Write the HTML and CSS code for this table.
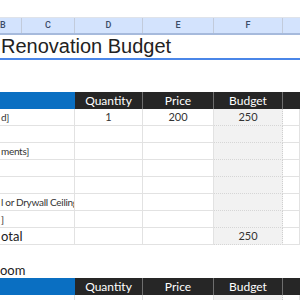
FILE: index.html
```html
<!DOCTYPE html>
<html lang="en">
<head>
<meta charset="utf-8">
<title>Renovation Budget</title>
<link rel="stylesheet" href="styles.css">
</head>
<body>
<div class="sheet">
  <div class="toolbar"></div>
  <div class="colhead">
    <div class="ch ch-b">B</div>
    <div class="ch">C</div>
    <div class="ch">D</div>
    <div class="ch">E</div>
    <div class="ch">F</div>
    <div class="ch ch-last"></div>
  </div>
  <div class="title-row"><h1 class="title">Renovation Budget</h1></div>
  <div class="spacer"></div>

  <div class="row thead">
    <div class="th th-cat"></div>
    <div class="th">Quantity</div>
    <div class="th">Price</div>
    <div class="th">Budget</div>
    <div class="th th-last"></div>
  </div>
  <div class="row">
    <div class="cell label">d]</div>
    <div class="cell num">1</div>
    <div class="cell num">200</div>
    <div class="cell num budget">250</div>
    <div class="cell"></div>
  </div>
  <div class="row">
    <div class="cell label"></div>
    <div class="cell"></div>
    <div class="cell"></div>
    <div class="cell budget"></div>
    <div class="cell"></div>
  </div>
  <div class="row">
    <div class="cell label">ments]</div>
    <div class="cell"></div>
    <div class="cell"></div>
    <div class="cell budget"></div>
    <div class="cell"></div>
  </div>
  <div class="row">
    <div class="cell label"></div>
    <div class="cell"></div>
    <div class="cell"></div>
    <div class="cell budget"></div>
    <div class="cell"></div>
  </div>
  <div class="row">
    <div class="cell label"></div>
    <div class="cell"></div>
    <div class="cell"></div>
    <div class="cell budget"></div>
    <div class="cell"></div>
  </div>
  <div class="row">
    <div class="cell label">l or Drywall Ceiling</div>
    <div class="cell"></div>
    <div class="cell"></div>
    <div class="cell budget"></div>
    <div class="cell"></div>
  </div>
  <div class="row">
    <div class="cell label">]</div>
    <div class="cell"></div>
    <div class="cell"></div>
    <div class="cell budget"></div>
    <div class="cell"></div>
  </div>
  <div class="row">
    <div class="cell label total">otal</div>
    <div class="cell"></div>
    <div class="cell"></div>
    <div class="cell num budget">250</div>
    <div class="cell"></div>
  </div>

  <div class="blank"></div>
  <div class="section">oom</div>

  <div class="row thead">
    <div class="th th-cat"></div>
    <div class="th">Quantity</div>
    <div class="th">Price</div>
    <div class="th">Budget</div>
    <div class="th th-last"></div>
  </div>
  <div class="row">
    <div class="cell label"></div>
    <div class="cell"></div>
    <div class="cell"></div>
    <div class="cell budget"></div>
    <div class="cell"></div>
  </div>
</div>
</body>
</html>
```

FILE: styles.css
```css
html, body {
  margin: 0;
  padding: 0;
  background: #ffffff;
}

.sheet {
  width: 300px;
  height: 300px;
  overflow: hidden;
  font-family: "Lato", "Liberation Sans", sans-serif;
  color: #333333;
}

.toolbar {
  height: 17px;
  background: #ffffff;
}

.colhead {
  display: grid;
  grid-template-columns: 22px 53px 68px 71px 69px 1fr;
  height: 18px;
  box-sizing: border-box;
  background: #d3e3fd;
  border-top: 1px solid #dfe3ea;
  border-bottom: 2px solid #a6badc;
}

.ch {
  font-family: "Roboto", "Liberation Sans", sans-serif;
  font-size: 9px;
  font-weight: 500;
  color: #3a4a66;
  line-height: 15px;
  text-align: center;
  border-right: 1px solid #c2cbdb;
}

.ch-b {
  text-align: left;
  padding-left: 0;
}

.ch-last {
  border-right: none;
}

.title-row {
  height: 25px;
  box-sizing: border-box;
  border-bottom: 2px solid #4a86e8;
}

.title {
  margin: 0;
  padding-left: 1px;
  font-family: "Liberation Sans", Arial, sans-serif;
  font-weight: normal;
  font-size: 20px;
  line-height: 23px;
  color: #222222;
  white-space: nowrap;
}

.spacer {
  height: 32px;
}

.row {
  display: grid;
  grid-template-columns: 75px 68px 71px 69px 1fr;
  height: 17px;
}

.thead {
  background: #262626;
}

.th {
  box-sizing: border-box;
  border-right: 1px solid #6e6e6e;
  color: #ffffff;
  font-size: 12px;
  line-height: 17px;
  text-align: center;
  white-space: nowrap;
}

.th-cat {
  background: #0a6fc2;
  border-right: none;
}

.th-last {
  border-right: none;
}

.cell {
  box-sizing: border-box;
  border-right: 1px solid #e2e2e2;
  border-bottom: 1px solid #e2e2e2;
  font-size: 11px;
  line-height: 16px;
  white-space: nowrap;
  overflow: hidden;
  color: #333333;
}

.label {
  padding-left: 1px;
  font-size: 10px;
  letter-spacing: -0.3px;
}

.total {
  font-size: 13px;
  letter-spacing: 0;
  color: #222222;
}

.num {
  text-align: center;
}

.budget {
  background: #f2f2f2;
  border-right: 1px dotted #cfcfcf;
  border-bottom: 1px dotted #d6d6d6;
}

.blank {
  height: 17px;
}

.section {
  height: 16px;
  font-size: 13px;
  line-height: 16px;
  color: #222222;
  padding-left: 0;
  white-space: nowrap;
}
```
